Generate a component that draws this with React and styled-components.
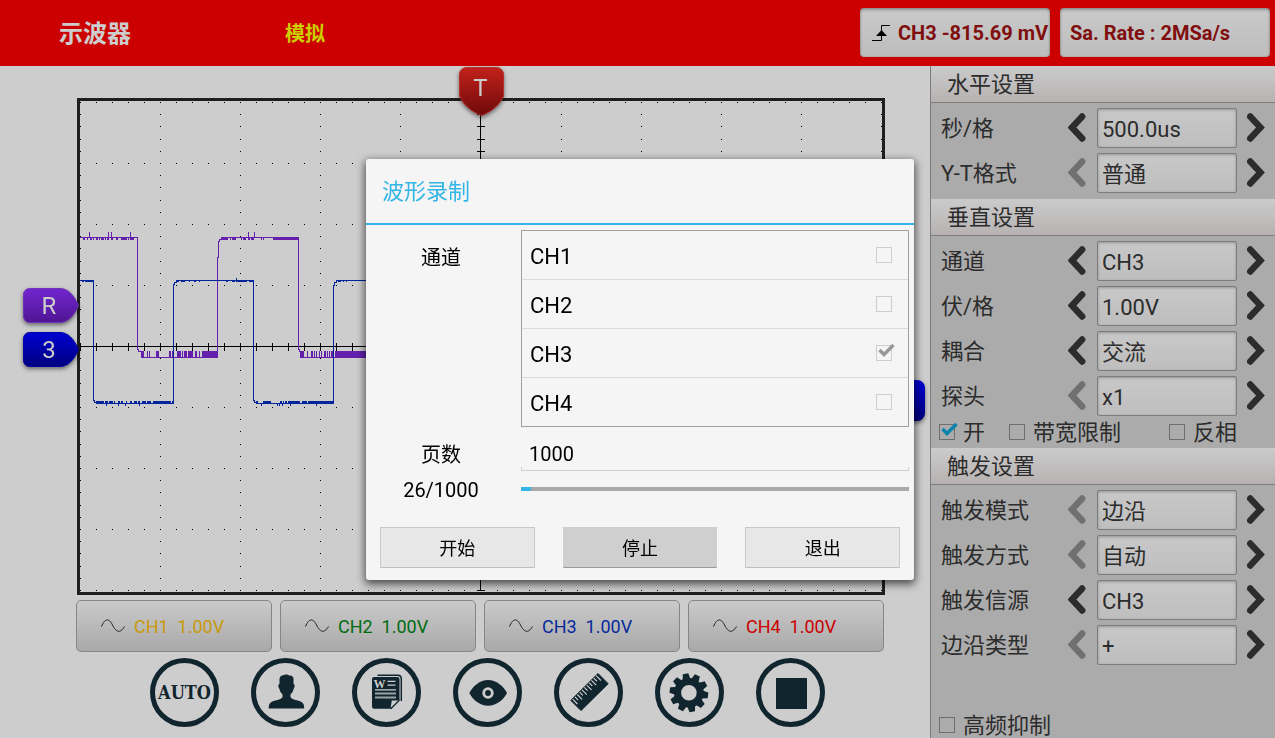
import React from "react";
import styled, { createGlobalStyle } from "styled-components";

const INK = "#11252f";
const TEXT = "#2c2c2c";

const GlobalStyle = createGlobalStyle`
  *, *::before, *::after { box-sizing: border-box; }
  body {
    margin: 0;
    background: #cdcdcd;
    color: ${TEXT};
    font-family: Roboto, "Noto Sans CJK SC", sans-serif;
  }
  button, input { font: inherit; color: inherit; margin: 0; }
  button { cursor: pointer; }
`;

const Page = styled.div`
  display: flex;
  flex-direction: column;
  min-height: 100vh;
`;

/* ---------- top bar ---------- */

const TopBar = styled.header`
  display: flex;
  align-items: center;
  height: 66px;
  padding: 0 5px 1px 59px;
  background: #cc0000;
`;

const AppTitle = styled.h1`
  margin: 0;
  padding-top: 2px;
  width: 226px;
  font-size: 24px;
  line-height: 32px;
  font-weight: 700;
  color: #cdcdcd;
`;

const Mode = styled.span`
  flex: 1;
  padding-top: 2px;
  font-size: 20px;
  line-height: 32px;
  font-weight: 700;
  color: #cdcd00;
`;

const Readouts = styled.div`
  display: flex;
  gap: 10px;
`;

const Readout = styled.button`
  display: flex;
  align-items: center;
  gap: 8px;
  width: ${(p) => p.$width};
  height: 49px;
  padding: 0 0 0 ${(p) => p.$inset};
  border: 0;
  border-radius: 4px;
  background: linear-gradient(#c9c9c9, #bdbdbd);
  box-shadow: inset 0 2px 3px rgba(0, 0, 0, 0.25), inset 0 0 2px rgba(0, 0, 0, 0.3);
  color: #800e0e;
  font-size: 20px;
  font-weight: 700;
  white-space: nowrap;
`;

/* ---------- body ---------- */

const Body = styled.div`
  flex: 1;
  display: flex;
`;

const Main = styled.main`
  flex: 1;
  min-width: 0;
  display: flex;
  flex-direction: column;
  padding-top: 32px;
`;

const ScopeRow = styled.section`
  padding: 0 45px 0 77px;
`;

const Scope = styled.div`
  position: relative;
  border: 3px solid #1e1e1e;
`;

const Plot = styled.svg`
  display: block;
  width: 100%;
  height: auto;
`;

const Marker = styled.button`
  position: absolute;
  left: ${(p) => p.$left};
  top: ${(p) => p.$top};
  display: grid;
  place-items: center;
  width: ${(p) => p.$w}px;
  height: ${(p) => p.$h}px;
  padding: 0;
  border: 0;
  background: none;
  filter: drop-shadow(0 2px 2px rgba(0, 0, 0, 0.5));
`;

const MarkerShape = styled.svg`
  grid-area: 1 / 1;
  width: 100%;
  height: 100%;
`;

const MarkerLetter = styled.span`
  grid-area: 1 / 1;
  z-index: 1;
  padding: ${(p) => p.$pad};
  font-size: 24px;
  line-height: 28px;
  color: #cdcdcd;
`;

const ChannelRow = styled.div`
  display: grid;
  grid-template-columns: repeat(4, 1fr);
  gap: 8px;
  padding: 5px 46px 0 76px;
`;

const ChannelButton = styled.button`
  display: flex;
  align-items: center;
  gap: 9px;
  height: 52px;
  padding: 0 0 0 24px;
  border: 1px solid #868686;
  border-radius: 5px;
  background: linear-gradient(#cacaca, #a9a9a9);
  color: ${(p) => p.$color};
  font-size: 18px;
  white-space: pre;
`;

const ToolRow = styled.nav`
  display: flex;
  justify-content: center;
  gap: 32px;
  padding: 6px 0 10px 45px;
`;

const ToolButton = styled.button`
  display: grid;
  place-items: center;
  width: 69px;
  height: 69px;
  padding: 0;
  border: 5px solid ${INK};
  border-radius: 50%;
  background: none;
  color: ${INK};
`;

const ToolArt = styled.svg`
  width: 59px;
  height: 59px;
`;

const AutoText = styled.span`
  font-family: "DejaVu Serif Condensed", "DejaVu Serif", serif;
  font-size: 18px;
  line-height: 20px;
  font-weight: 700;
`;

/* ---------- settings panel ---------- */

const Panel = styled.aside`
  flex: 0 0 345px;
  display: flex;
  flex-direction: column;
  border-left: 1px solid #7c7c7c;
  background: #ababab;
`;

const PanelTitle = styled.h2`
  margin: 0;
  height: 37px;
  padding-left: 16px;
  border-bottom: 1px solid #7f7c7c;
  background: linear-gradient(#cbcbcb, #b7b2b2);
  font-size: 22px;
  line-height: 38px;
  font-weight: 400;
`;

const Settings = styled.div`
  display: grid;
  gap: 5px;
  padding: 5px 0 ${(p) => p.$bottom || "0"};
`;

const SettingRow = styled.div`
  display: grid;
  grid-template-columns: 1fr 40px 140px 38px;
  align-items: center;
  height: 40px;
  padding-left: 10px;
`;

const SettingLabel = styled.label`
  padding-top: 2px;
  font-size: 22px;
  line-height: 32px;
`;

const StepButton = styled.button`
  display: grid;
  place-items: center;
  height: 40px;
  padding: 0;
  border: 0;
  background: none;
  color: ${TEXT};
  &:disabled { color: #707070; }
`;

const ValueBox = styled.input`
  width: 100%;
  height: 40px;
  padding: ${(p) => (p.$han ? "0 4px 2px" : "2px 4px 0")};
  border: 1px solid #7c7c7c;
  border-radius: 2px;
  background: linear-gradient(#c8c8c8, #bebebe);
  box-shadow: inset 0 1px 3px rgba(0, 0, 0, 0.25);
  font-size: 22px;
  outline: none;
`;

const CheckGrid = styled.div`
  display: grid;
  grid-template-columns: 70px 160px 1fr;
  align-items: center;
  height: 32px;
  padding-left: 8px;
`;

const PanelFoot = styled.div`
  margin-top: auto;
  display: flex;
  align-items: center;
  height: 26px;
  padding-left: 8px;
`;

const CheckLabel = styled.label`
  display: flex;
  align-items: center;
  gap: 8px;
  font-size: 22px;
  line-height: 24px;
  white-space: nowrap;
`;

const CheckText = styled.span`
  padding-top: 2px;
`;

const TickHolder = styled.span`
  position: relative;
  display: block;
  width: 16px;
  height: 16px;
`;

const TickInput = styled.input`
  appearance: none;
  display: block;
  width: 16px;
  height: 16px;
  border: 1px solid ${(p) => p.$line};
`;

const TickMark = styled.svg`
  position: absolute;
  left: 2px;
  top: -2px;
  width: 18px;
  height: 16px;
  pointer-events: none;
`;

/* ---------- recording dialog ---------- */

const Overlay = styled.div`
  position: fixed;
  inset: 0;
  display: flex;
  align-items: center;
  justify-content: center;
  padding: 1px 0 0 5px;
`;

const Dialog = styled.section`
  width: 548px;
  border-radius: 3px;
  background: #f5f5f5;
  box-shadow: 0 3px 8px 1px rgba(0, 0, 0, 0.65);
  color: #000;
`;

const DialogTitle = styled.h2`
  margin: 0;
  padding: 2px 16px 0;
  border-bottom: 2px solid #33b5e5;
  color: #33b5e5;
  font-size: 22px;
  line-height: 62px;
  font-weight: 400;
`;

const DialogForm = styled.div`
  display: grid;
  grid-template-columns: 150px 1fr;
  grid-template-rows: auto 44px 36px;
  column-gap: 5px;
  padding: 5px 5px 0 0;
`;

const FormLabel = styled.label`
  align-self: ${(p) => p.$align || "center"};
  padding-top: ${(p) => p.$top || "0"};
  text-align: center;
  font-size: 20px;
  line-height: 28px;
`;

const ChannelList = styled.ul`
  margin: 0;
  padding: 0;
  list-style: none;
  border: 1px solid #a0a0a0;
`;

const ChannelItem = styled.li`
  & + & { border-top: 1px solid #dadada; }
`;

const ChannelItemLabel = styled.label`
  display: flex;
  align-items: center;
  justify-content: space-between;
  height: 48px;
  padding: 0 16px 0 8px;
  font-size: 22px;
`;

const PagesInput = styled.input`
  align-self: end;
  width: 100%;
  height: 34px;
  padding: 0 8px;
  border: 0;
  background:
    linear-gradient(#cfcfcf, #cfcfcf) left bottom / 1px 4px no-repeat,
    linear-gradient(#cfcfcf, #cfcfcf) right bottom / 1px 4px no-repeat,
    linear-gradient(#cfcfcf, #cfcfcf) left bottom / 100% 1px no-repeat;
  font-size: 20px;
  outline: none;
`;

const Progress = styled.progress`
  appearance: none;
  align-self: center;
  display: block;
  width: 100%;
  height: 4px;
  border: 0;
  &::-webkit-progress-bar { background: #aaaaaa; }
  &::-webkit-progress-value { background: #33b5e5; }
`;

const DialogActions = styled.div`
  display: grid;
  grid-template-columns: repeat(3, 1fr);
  gap: 28px;
  padding: 20px 14px 12px;
`;

const ActionButton = styled.button`
  height: 41px;
  padding: 0 0 2px;
  border: 1px solid ${(p) => (p.$pressed ? "#cfcfcf" : "#c9c9c9")};
  border-bottom-color: ${(p) => (p.$pressed ? "#999" : "#c0c0c0")};
  background: ${(p) => (p.$pressed ? "#cfcfcf" : "#e7e7e7")};
  font-size: 18px;
`;

/* ---------- drawings ---------- */

const range = (n) => Array.from({ length: n }, (_, i) => i);

// Graticule: 10 x 8 divisions, 5 dots per division; the right half starts one pixel later.
const xDots = [...range(26).map((i) => i * 16), ...range(25).map((i) => 417 + i * 16)];
const yDots = range(41).map((i) => Math.round(1 + i * 12.2));
const dots = [];
xDots.forEach((x) => range(9).forEach((r) => dots.push([x, 1 + r * 61])));
range(11).forEach((c) => {
  if (c !== 5) yDots.forEach((y) => dots.push([xDots[c * 5], y]));
});
const dotPath = dots.map(([x, y]) => `M${x} ${y}h1v1h-1z`).join("");
const tickPath =
  xDots.map((x) => `M${x} 242h1v8h-1z`).join("") +
  yDots.map((y) => `M397 ${y}h8v1h-8z`).join("");

const bars = (y, h, list) =>
  list.map(([a, b]) => `M${a} ${y}h${b - a + 1}v${h}h${a - b - 1}z`).join("");

const refHigh = [
  [3, 4], [7, 7], [10, 11], [13, 13], [16, 17], [19, 19], [21, 23], [25, 25], [27, 28], [31, 32],
  [36, 37], [41, 46], [48, 48], [50, 53], [142, 147], [150, 150], [152, 155], [161, 161],
  [163, 165], [168, 169], [171, 173], [181, 181], [183, 183], [193, 218],
];
const refLow = [
  [61, 63], [67, 67], [69, 69], [76, 78], [89, 90], [92, 93], [97, 100], [102, 102], [104, 106],
  [108, 112], [115, 116], [119, 119], [122, 137], [220, 223], [227, 227], [231, 232], [234, 234],
  [236, 236], [239, 239], [241, 241], [244, 245], [247, 247], [249, 249], [251, 252], [255, 297],
];
const chHigh = [[2, 3], [5, 13], [97, 98], [101, 104], [109, 109], [114, 115], [119, 119], [146, 147],
  [152, 154], [156, 166], [169, 172], [258, 260], [263, 263], [266, 266]];
const chLow = [
  [16, 23], [25, 27], [29, 32], [34, 34], [38, 39], [41, 42], [46, 46], [50, 51], [54, 56],
  [58, 59], [62, 65], [67, 70], [73, 79], [80, 90], [92, 93], [176, 177], [183, 190], [200, 201],
  [203, 203], [205, 206], [208, 219], [222, 226], [228, 253],
];
const chDip = [[26, 26], [38, 38], [45, 45], [59, 59], [181, 181], [197, 197], [199, 199], [202, 202], [210, 210], [236, 236]];

function Waveforms() {
  return (
    <Plot viewBox="0 0 802 491" shapeRendering="crispEdges" role="img" aria-label="CH3">
      <path d={dotPath} fill="#000" />
      <path d="M0 245h802v1H0z M400 1h1v489h-1z" fill="#000" />
      <path d={tickPath} fill="#000" />
      <path
        d="M0 136.5H57.5V248.5H58.5V250.5H61V256.5H137.5V156.5H138.5V140.5H139.5V138.5H141.5V136.5H218.5V248.5H219.5V250.5H220.5V256.5H297"
        fill="none"
        stroke="#6420ac"
      />
      <path
        d={bars(137, 2, refHigh) + bars(250, 6, refLow) + bars(131, 6, [[9, 9], [28, 28], [31, 31], [50, 50], [168, 168], [174, 174]])}
        fill="#6420ac"
      />
      <path
        d="M0 179.5H13.5V299.5H14.5V301.5H16V302.5H93.5V183.5H94.5V181.5H96V179.5H173.5V299.5H174.5V301.5H176V302.5H253.5V184.5H254.5V181.5H256V179.5H297"
        fill="none"
        stroke="#03249a"
      />
      <path
        d={bars(180, 1, chHigh) + bars(300, 2, chLow) + bars(303, 2, chDip) + bars(177, 3, [[156, 156]])}
        fill="#03249a"
      />
    </Plot>
  );
}

function SideMarker({ letter, top, from, to, edge, id }) {
  return (
    <Marker $left="-57px" $top={top} $w={56} $h={35}>
      <MarkerShape viewBox="0 0 56 35">
        <defs>
          <linearGradient id={id} x1="0" y1="0" x2="0" y2="1">
            <stop offset="0" stopColor={from} />
            <stop offset="1" stopColor={to} />
          </linearGradient>
        </defs>
        <path
          d="M6.500 .5H37C45 .5 51 7 55.500 17.500C51 28 45 34.500 37 34.500H6.500A6 6 0 0 1 .5 28.500V6.500A6 6 0 0 1 6.500 .5Z"
          fill={`url(#${id})`}
          stroke={edge}
        />
      </MarkerShape>
      <MarkerLetter $pad="0 4px 0 0">{letter}</MarkerLetter>
    </Marker>
  );
}

function TriggerMarker() {
  return (
    <Marker $left="calc(50% - 22px)" $top="-34px" $w={45} $h={49}>
      <MarkerShape viewBox="0 0 45 49">
        <defs>
          <linearGradient id="trig" x1="0" y1="0" x2="0" y2="1">
            <stop offset="0" stopColor="#c3211b" />
            <stop offset="1" stopColor="#6d0a0a" />
          </linearGradient>
        </defs>
        <path
          d="M7.500 .5H37.500A7 7 0 0 1 44.500 7.500V29C41 38 32 45 22.500 48.500C13 45 4 38 .5 29V7.500A7 7 0 0 1 7.500 .5Z"
          fill="url(#trig)"
          stroke="#b5302c"
        />
      </MarkerShape>
      <MarkerLetter $pad="0 2px 8px 0">T</MarkerLetter>
    </Marker>
  );
}

function LevelMarker() {
  return (
    <Marker $left="calc(100% - 14px)" $top="279px" $w={57} $h={41} aria-label="CH3">
      <MarkerShape viewBox="0 0 57 41">
        <defs>
          <linearGradient id="level" x1="0" y1="0" x2="0" y2="1">
            <stop offset="0" stopColor="#0000d8" />
            <stop offset="1" stopColor="#000078" />
          </linearGradient>
        </defs>
        <path d="M49 0H19C11 0 5 8 0 20.500C5 33 11 41 19 41H49A8 8 0 0 0 57 33V8A8 8 0 0 0 49 0Z" fill="url(#level)" />
      </MarkerShape>
    </Marker>
  );
}

function Chevron({ right }) {
  return (
    <svg width="18" height="30" viewBox="0 0 18 30" aria-hidden="true">
      <path
        d={right ? "M3.200 3.500L13.500 14.500L3.200 25.500" : "M14.200 3.500L4 14.500L14.200 25.500"}
        fill="none"
        stroke="currentColor"
        strokeWidth="6.400"
        strokeLinecap="round"
      />
    </svg>
  );
}

function EdgeIcon() {
  return (
    <svg width="18" height="18" viewBox="0 0 18 18" aria-hidden="true">
      <path d="M0 16.500H9.500V1.500H18" fill="none" stroke="#000" />
      <path d="M9.500 6L15 12H4Z" fill="#000" />
    </svg>
  );
}

function SineIcon() {
  return (
    <svg width="24" height="14" viewBox="0 0 24 14" aria-hidden="true">
      <path d="M.5 7.500C4-1 8-1 11.500 6S19 15 23.500 7.500" fill="none" stroke="#222" />
    </svg>
  );
}

function PersonArt() {
  return (
    <ToolArt viewBox="5 5 59 59" fill={INK}>
      <path d="M28.500 20.500C29 18.500 30 17.500 31.500 17.500C34 16 37 16.200 38 17.500C41 17.200 42.500 18.500 42.500 21V26C44 26.200 44 29 42.600 31C42 33.500 41 35 39.500 36.500V39C40.500 42 47 42 50.500 44C53 45.500 53.200 47.500 53.200 50.500H17.700C17.700 47.500 17.900 45.500 20.500 44C24 42 30.500 42 31.500 39V36.500C30 35 29 33.500 28.500 31C27 29 27 26.200 28.500 26Z" />
    </ToolArt>
  );
}

function DocumentArt() {
  return (
    <ToolArt viewBox="5 5 59 59">
      <path d="M25.500 17.300H46A3.500 3.500 0 0 1 49.300 20.500V43" fill="none" stroke={INK} strokeWidth="1.500" />
      <path d="M22 19H45A2.500 2.500 0 0 1 47.500 21.500V42L39 50.800H22A2 2 0 0 1 20 48.800V21A2 2 0 0 1 22 19Z" fill={INK} />
      <path d="M46.800 42.600H39.800L38.600 50Z" fill="#cdcdcd" />
      <path d="M47.500 42L38.800 50.800" stroke={INK} strokeWidth="1.200" />
      <path d="M35.500 23.300H43.500M35.500 27.200H43.500M23 31.800H44" stroke="#cdcdcd" strokeWidth="1.300" />
      <path d="M23 35.500H44M23 39.500H44" stroke="#9aa3a6" strokeWidth="2" />
      <text x="27.500" y="30" textAnchor="middle" fontFamily="Liberation Serif" fontWeight="700" fontSize="12" fill="#cdcdcd">
        W
      </text>
    </ToolArt>
  );
}

function EyeArt() {
  return (
    <ToolArt viewBox="5 5 59 59">
      <path d="M16.300 35C20 28 27 22 35 22S50.500 28 54 35C50.500 42 43 47.800 35 47.800S20 42 16.300 35Z" fill={INK} />
      <circle cx="35" cy="35" r="4.300" fill="none" stroke="#cdcdcd" strokeWidth="2.800" />
    </ToolArt>
  );
}

function RulerArt() {
  return (
    <ToolArt viewBox="5 5 59 59">
      <path d="M44 15.500L54.200 25.700L27 52.600L16.800 42.400Z" fill={INK} stroke={INK} strokeLinejoin="round" />
      {range(11).map((i) => {
        const x = 18.6 + i * 2.35;
        const y = 41.2 - i * 2.35;
        const len = i % 2 ? 3.2 : 4.8;
        return <path key={i} d={`M${x} ${y}l${len} ${len}`} stroke="#cdcdcd" strokeWidth="1.200" />;
      })}
    </ToolArt>
  );
}

function GearArt() {
  return (
    <ToolArt viewBox="5 5 59 59">
      <g transform="translate(33.900 34.700)">
        <circle r="11.300" fill="none" stroke={INK} strokeWidth="7" />
        {range(10).map((i) => (
          <path key={i} d="M-4-13L-2.800-19.300H2.800L4-13Z" fill={INK} transform={`rotate(${-10 + i * 36})`} />
        ))}
      </g>
    </ToolArt>
  );
}

function StopArt() {
  return (
    <ToolArt viewBox="5 5 59 59">
      <rect x="20" y="20" width="31" height="31" fill={INK} />
    </ToolArt>
  );
}

/* ---------- composed parts ---------- */

function TickBox({ checked, line, mark }) {
  return (
    <TickHolder>
      <TickInput type="checkbox" defaultChecked={checked} $line={line} />
      {checked && (
        <TickMark viewBox="0 0 18 16">
          <path d="M1.500 7L6 11.500L15.500 2" fill="none" stroke={mark} strokeWidth="3.500" />
        </TickMark>
      )}
    </TickHolder>
  );
}

function Check({ checked, children }) {
  return (
    <CheckLabel>
      <TickBox checked={checked} line="#6e6e6e" mark="#0a83ad" />
      <CheckText>{children}</CheckText>
    </CheckLabel>
  );
}

function Setting({ id, label, value, atStart }) {
  return (
    <SettingRow>
      <SettingLabel htmlFor={id}>{label}</SettingLabel>
      <StepButton disabled={atStart} aria-label="‹">
        <Chevron />
      </StepButton>
      <ValueBox id={id} defaultValue={value} readOnly $han={/\p{Script=Han}/u.test(value)} />
      <StepButton aria-label="›">
        <Chevron right />
      </StepButton>
    </SettingRow>
  );
}

const channels = [
  ["CH1", "#c8990a"],
  ["CH2", "#006c10"],
  ["CH3", "#062a9c"],
  ["CH4", "#cc0000"],
];

export default function App() {
  return (
    <Page>
      <GlobalStyle />
      <TopBar>
        <AppTitle>示波器</AppTitle>
        <Mode>模拟</Mode>
        <Readouts>
          <Readout $width="190px" $inset="12px">
            <EdgeIcon />
            CH3 -815.69 mV
          </Readout>
          <Readout $width="210px" $inset="10px">Sa. Rate : 2MSa/s</Readout>
        </Readouts>
      </TopBar>

      <Body>
        <Main>
          <ScopeRow>
            <Scope>
              <Waveforms />
              <TriggerMarker />
              <SideMarker letter="R" top="187px" from="#7126cf" to="#501594" edge="#6f35b8" id="ref" />
              <SideMarker letter="3" top="231px" from="#0000d2" to="#00007e" edge="#0000a8" id="ch3" />
              <LevelMarker />
            </Scope>
          </ScopeRow>
          <ChannelRow>
            {channels.map(([name, color]) => (
              <ChannelButton key={name} $color={color}>
                <SineIcon />
                {`${name}  1.00V`}
              </ChannelButton>
            ))}
          </ChannelRow>
          <ToolRow>
            <ToolButton><AutoText>AUTO</AutoText></ToolButton>
            <ToolButton><PersonArt /></ToolButton>
            <ToolButton><DocumentArt /></ToolButton>
            <ToolButton><EyeArt /></ToolButton>
            <ToolButton><RulerArt /></ToolButton>
            <ToolButton><GearArt /></ToolButton>
            <ToolButton><StopArt /></ToolButton>
          </ToolRow>
        </Main>

        <Panel>
          <PanelTitle>水平设置</PanelTitle>
          <Settings $bottom="6px">
            <Setting id="timebase" label="秒/格" value="500.0us" />
            <Setting id="format" label="Y-T格式" value="普通" atStart />
          </Settings>
          <PanelTitle>垂直设置</PanelTitle>
          <Settings>
            <Setting id="channel" label="通道" value="CH3" />
            <Setting id="volts" label="伏/格" value="1.00V" />
            <Setting id="coupling" label="耦合" value="交流" />
            <Setting id="probe" label="探头" value="x1" atStart />
          </Settings>
          <CheckGrid>
            <Check checked>开</Check>
            <Check>带宽限制</Check>
            <Check>反相</Check>
          </CheckGrid>
          <PanelTitle>触发设置</PanelTitle>
          <Settings>
            <Setting id="trigger-mode" label="触发模式" value="边沿" atStart />
            <Setting id="trigger-sweep" label="触发方式" value="自动" atStart />
            <Setting id="trigger-source" label="触发信源" value="CH3" />
            <Setting id="edge-type" label="边沿类型" value="+" atStart />
          </Settings>
          <PanelFoot>
            <Check>高频抑制</Check>
          </PanelFoot>
        </Panel>
      </Body>

      <Overlay>
        <Dialog role="dialog" aria-labelledby="record-title">
          <DialogTitle id="record-title">波形录制</DialogTitle>
          <DialogForm>
            <FormLabel as="span" $align="start" $top="14px">通道</FormLabel>
            <ChannelList>
              {channels.map(([name]) => (
                <ChannelItem key={name}>
                  <ChannelItemLabel>
                    <CheckText>{name}</CheckText>
                    <TickBox checked={name === "CH3"} line="#cecece" mark="#989898" />
                  </ChannelItemLabel>
                </ChannelItem>
              ))}
            </ChannelList>
            <FormLabel htmlFor="pages" $top="12px">页数</FormLabel>
            <PagesInput id="pages" type="text" defaultValue="1000" />
            <FormLabel htmlFor="recorded" $top="2px">26/1000</FormLabel>
            <Progress id="recorded" value={26} max={1000} />
          </DialogForm>
          <DialogActions>
            <ActionButton>开始</ActionButton>
            <ActionButton $pressed>停止</ActionButton>
            <ActionButton>退出</ActionButton>
          </DialogActions>
        </Dialog>
      </Overlay>
    </Page>
  );
}
